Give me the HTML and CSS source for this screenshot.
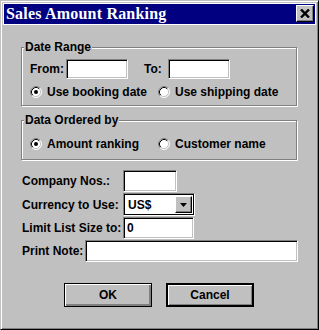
FILE: index.html
```
<!DOCTYPE html>
<html>
<head>
<meta charset="utf-8">
<link rel="stylesheet" href="styles.css">
</head>
<body>
<div class="window">
  <div class="titlebar">
    <span class="title">Sales Amount Ranking</span>
    <span class="close">
      <svg width="10" height="9" viewBox="0 0 10 9"><path d="M1 0.5 L9 8.5 M9 0.5 L1 8.5" stroke="#000" stroke-width="2.4" fill="none"/></svg>
    </span>
  </div>
  <div class="content">
    <fieldset class="group g1">
      <legend>Date Range</legend>
      <div class="daterow">
        <span class="lbl-from">From:</span>
        <input class="field date" type="text" value="">
        <span class="lbl-to">To:</span>
        <input class="field date" type="text" value="">
      </div>
      <div class="radiorow">
        <span class="radio first">
          <svg class="rb" width="12" height="12" viewBox="0 0 12 12"><circle cx="6" cy="6" r="5" fill="#fff"/><path d="M2.11 9.89 A5.5 5.5 0 0 1 9.89 2.11" stroke="#808080" fill="none"/><path d="M9.89 2.11 A5.5 5.5 0 0 1 2.11 9.89" stroke="#fff" fill="none"/><path d="M2.82 9.18 A4.5 4.5 0 0 1 9.18 2.82" stroke="#000" fill="none"/><path d="M9.18 2.82 A4.5 4.5 0 0 1 2.82 9.18" stroke="#c0c0c0" fill="none"/><circle cx="6" cy="6" r="2" fill="#000"/></svg>
          Use booking date
        </span>
        <span class="radio">
          <svg class="rb" width="12" height="12" viewBox="0 0 12 12"><circle cx="6" cy="6" r="5" fill="#fff"/><path d="M2.11 9.89 A5.5 5.5 0 0 1 9.89 2.11" stroke="#808080" fill="none"/><path d="M9.89 2.11 A5.5 5.5 0 0 1 2.11 9.89" stroke="#fff" fill="none"/><path d="M2.82 9.18 A4.5 4.5 0 0 1 9.18 2.82" stroke="#000" fill="none"/><path d="M9.18 2.82 A4.5 4.5 0 0 1 2.82 9.18" stroke="#c0c0c0" fill="none"/></svg>
          Use shipping date
        </span>
      </div>
    </fieldset>
    <fieldset class="group g2">
      <legend>Data Ordered by</legend>
      <div class="radiorow">
        <span class="radio first">
          <svg class="rb" width="12" height="12" viewBox="0 0 12 12"><circle cx="6" cy="6" r="5" fill="#fff"/><path d="M2.11 9.89 A5.5 5.5 0 0 1 9.89 2.11" stroke="#808080" fill="none"/><path d="M9.89 2.11 A5.5 5.5 0 0 1 2.11 9.89" stroke="#fff" fill="none"/><path d="M2.82 9.18 A4.5 4.5 0 0 1 9.18 2.82" stroke="#000" fill="none"/><path d="M9.18 2.82 A4.5 4.5 0 0 1 2.82 9.18" stroke="#c0c0c0" fill="none"/><circle cx="6" cy="6" r="2" fill="#000"/></svg>
          Amount ranking
        </span>
        <span class="radio">
          <svg class="rb" width="12" height="12" viewBox="0 0 12 12"><circle cx="6" cy="6" r="5" fill="#fff"/><path d="M2.11 9.89 A5.5 5.5 0 0 1 9.89 2.11" stroke="#808080" fill="none"/><path d="M9.89 2.11 A5.5 5.5 0 0 1 2.11 9.89" stroke="#fff" fill="none"/><path d="M2.82 9.18 A4.5 4.5 0 0 1 9.18 2.82" stroke="#000" fill="none"/><path d="M9.18 2.82 A4.5 4.5 0 0 1 2.82 9.18" stroke="#c0c0c0" fill="none"/></svg>
          Customer name
        </span>
      </div>
    </fieldset>
    <div class="fields">
      <div class="frow r1">
        <span class="flabel">Company Nos.:</span>
        <input class="field company" type="text" value="">
      </div>
      <div class="frow r2">
        <span class="flabel">Currency to Use:</span>
        <div class="combo">
          <span class="combo-text">US$</span>
          <span class="dropbtn">
            <svg width="7" height="4" viewBox="0 0 7 4"><path d="M0 0 H7 L3.5 4 Z" fill="#000"/></svg>
          </span>
        </div>
      </div>
      <div class="frow r3">
        <span class="flabel">Limit List Size to:</span>
        <input class="field limit" type="text" value="0">
      </div>
      <div class="frow r4">
        <span class="flabel note">Print Note:</span>
        <input class="field printnote" type="text" value="">
      </div>
    </div>
    <div class="buttons">
      <button class="btn">OK</button>
      <button class="btn default">Cancel</button>
    </div>
  </div>
</div>
</body>
</html>
```
FILE: styles.css
```
html, body {
  margin: 0;
  padding: 0;
  background: #c0c0c0;
}

.window {
  width: 319px;
  height: 330px;
  box-sizing: border-box;
  background: #c0c0c0;
  border: 1px solid;
  border-color: #c0c0c0 #000 #000 #c0c0c0;
  box-shadow: inset 1px 1px #fff, inset -1px -1px #808080;
  padding: 2px;
  font-family: "Liberation Sans", Arial, sans-serif;
  font-weight: bold;
  font-size: 12px;
  color: #000;
}

.titlebar {
  display: flex;
  align-items: flex-start;
  height: 20px;
  border: 1px solid #fff;
  background: #000080;
  color: #fff;
}

.title {
  flex: 1;
  font-family: "Liberation Serif", "Times New Roman", serif;
  font-weight: bold;
  font-size: 16px;
  letter-spacing: 0.2px;
  line-height: 20px;
  padding-left: 2px;
  white-space: nowrap;
}

.close {
  margin-top: 1px;
  margin-right: 1px;
  width: 18px;
  height: 17px;
  box-sizing: border-box;
  background: #c0c0c0;
  border: 1px solid;
  border-color: #fff #000 #000 #fff;
  box-shadow: inset -1px -1px #808080;
  display: flex;
  align-items: center;
  justify-content: center;
}

.close svg {
  display: block;
}

.content {
  padding: 15px 0 0 18px;
}

.group {
  margin: 0;
  width: 276px;
  box-sizing: border-box;
  min-inline-size: 0;
  border: 1px solid #808080;
  box-shadow: 1px 1px 0 #fff, inset 1px 1px 0 #fff;
  padding: 5px 0 6px 8px;
}

.group legend {
  margin-left: -6px;
  padding: 0 1px;
  line-height: 14px;
  background: #c0c0c0;
}

.g2 {
  margin-top: 7px;
  padding-top: 10px;
  padding-bottom: 8px;
}

.daterow {
  display: flex;
  align-items: center;
  height: 20px;
}

.lbl-from {
  width: 36px;
}

.lbl-to {
  width: 24px;
  margin-left: 16px;
}

.field {
  box-sizing: border-box;
  margin: 0;
  border: 1px solid;
  border-color: #808080 #fff #fff #808080;
  box-shadow: inset 1px 1px 0 #000, inset -1px -1px 0 #c0c0c0;
  background: #fff;
  font: inherit;
  color: #000;
  padding: 0 3px;
  outline: none;
}

.date {
  width: 62px;
  height: 20px;
}

.radiorow {
  display: flex;
  align-items: center;
  height: 14px;
  margin-top: 6px;
}

.g2 .radiorow {
  margin-top: 0;
}

.radio {
  display: flex;
  align-items: center;
  gap: 5px;
  white-space: nowrap;
}

.radio.first {
  width: 128px;
}

.rb {
  display: block;
  flex: none;
}

.fields {
  margin-top: 10px;
  padding-left: 1px;
  display: flex;
  flex-direction: column;
  gap: 1px;
}

.frow {
  display: flex;
  align-items: center;
  height: 22px;
}

.frow.r2 {
  height: 23px;
}

.flabel {
  width: 101px;
  white-space: nowrap;
}

.flabel.note {
  width: 63px;
}

.company {
  width: 54px;
  height: 22px;
}

.limit {
  width: 71px;
  height: 22px;
}

.printnote {
  width: 213px;
  height: 22px;
}

.combo {
  width: 72px;
  height: 23px;
  box-sizing: border-box;
  border: 1px solid;
  border-color: #808080 #fff #fff #808080;
  box-shadow: inset 0 0 0 1px #000;
  background: #fff;
  display: flex;
  align-items: center;
  padding: 2px 2px 2px 4px;
}

.combo-text {
  flex: 1;
}

.dropbtn {
  width: 17px;
  height: 17px;
  box-sizing: border-box;
  background: #c0c0c0;
  border: 1px solid;
  border-color: #fff #000 #000 #fff;
  box-shadow: inset -1px -1px 0 #808080;
  display: flex;
  align-items: center;
  justify-content: center;
}

.dropbtn svg {
  display: block;
}

.buttons {
  display: flex;
  gap: 14px;
  margin-top: 21px;
  margin-left: 43px;
}

.btn {
  width: 88px;
  height: 24px;
  box-sizing: border-box;
  margin: 0;
  padding: 0;
  background: #c0c0c0;
  border: 1px solid #000;
  box-shadow: inset 1px 1px 0 #fff, inset -2px -2px 0 #808080;
  font: inherit;
  color: #000;
}

.btn.default {
  border-width: 2px;
  box-shadow: inset 1px 1px 0 #fff, inset -1px -1px 0 #808080;
}
```
